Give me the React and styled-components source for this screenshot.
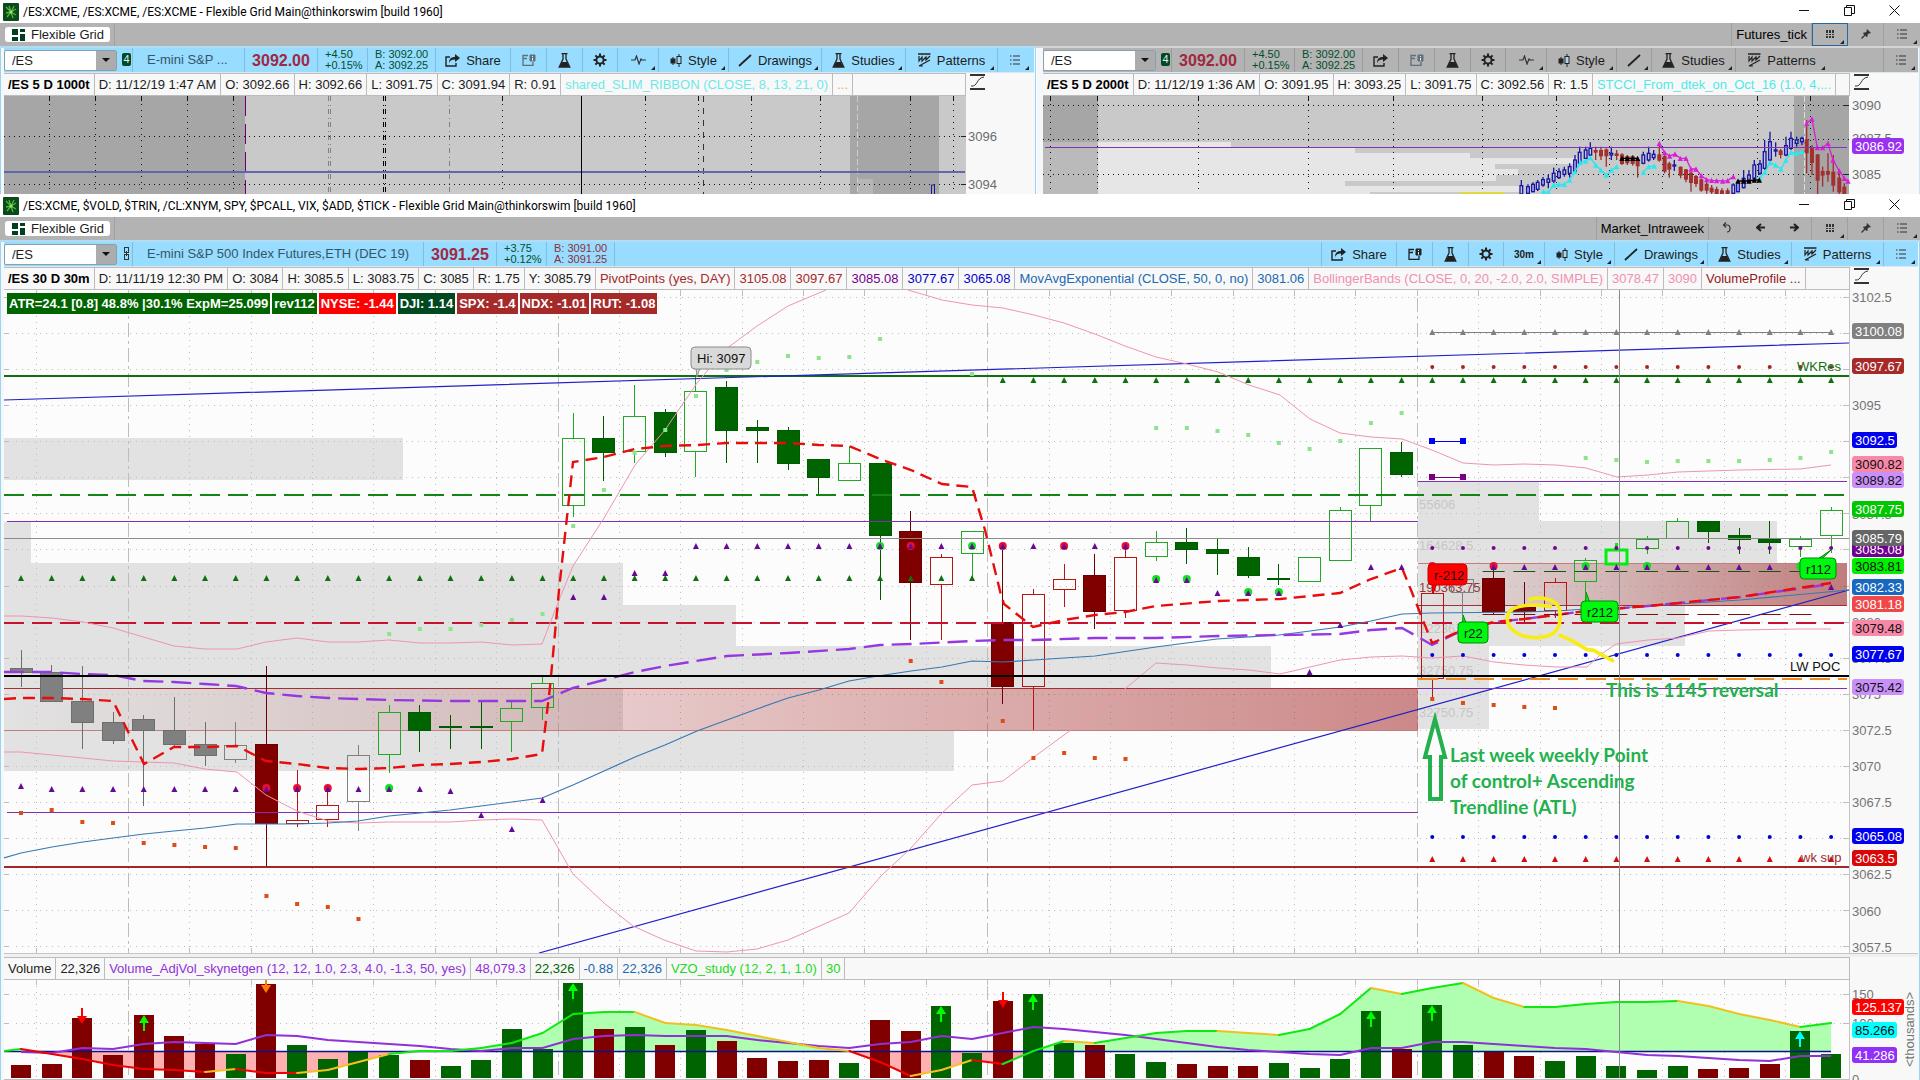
import React from 'react';
import styled, { createGlobalStyle } from 'styled-components';

const STEP = 30.68;
const px = (i) => 21 + STEP * i;
const range = (from, to) => Array.from({ length: to - from + 1 }, (_, k) => from + k);

/* ---------- chart data ---------- */

const TONES = {
    gf: { line: '#005a00', body: '#006400' },
    gh: { line: '#22a822', body: '#fcfcfc' },
    rf: { line: '#6c0000', body: '#800000' },
    rh: { line: '#b81414', body: '#fcfcfc' },
    nf: { line: '#6e6e6e', body: '#808080' },
    nh: { line: '#808080', body: '#fcfcfc' },
};

// tone, body top, body bottom, high, low
const candles = [
    ['nf', 668, 673, 650, 687], ['nf', 672, 702, 665, 702], ['nf', 701, 723, 666, 749], ['nf', 722, 741, 712, 744],
    ['nf', 719, 731, 715, 806], ['nf', 730, 745, 697, 748], ['nf', 744, 756, 722, 766], ['nh', 745, 760, 722, 763],
    ['rf', 744, 824, 666, 867], ['rh', 820, 824, 770, 827], ['rh', 805, 820, 787, 827], ['nh', 755, 802, 745, 831],
    ['gh', 712, 755, 705, 773], ['gf', 712, 731, 705, 752], ['gf', 726, 727, 715, 749], ['gf', 726, 727, 702, 749],
    ['gh', 708, 722, 702, 752], ['gh', 683, 708, 677, 720], ['gh', 438, 506, 413, 517], ['gf', 438, 453, 416, 481],
    ['gh', 416, 452, 385, 463], ['gf', 412, 453, 409, 457], ['gh', 391, 452, 377, 477], ['gf', 387, 431, 381, 463],
    ['gf', 427, 431, 420, 463], ['gf', 430, 464, 427, 470], ['gf', 459, 478, 459, 495], ['gh', 463, 481, 446, 481],
    ['gf', 463, 536, 463, 600], ['rf', 531, 583, 511, 640], ['rh', 557, 585, 554, 640], ['gh', 531, 554, 531, 577],
    ['rf', 622, 687, 546, 704], ['rh', 594, 687, 589, 730], ['rh', 579, 590, 564, 607], ['rf', 575, 612, 554, 629],
    ['rh', 557, 611, 548, 618], ['gh', 542, 557, 531, 561], ['gf', 542, 550, 528, 564], ['gf', 549, 554, 539, 575],
    ['gf', 557, 576, 547, 578], ['gf', 578, 579, 564, 585], ['gh', 557, 582, 557, 582], ['gh', 510, 561, 507, 561],
    ['gh', 448, 506, 448, 521], ['gf', 452, 475, 442, 477], ['rh', 593, 679, 575, 697], ['nh', 579, 593, 579, 615],
    ['rf', 578, 612, 570, 614], ['rf', 607, 612, 582, 623], ['rh', 582, 611, 578, 618], ['gh', 560, 582, 558, 592],
    null, ['gh', 539, 549, 536, 554], ['gh', 521, 539, 518, 539], ['gf', 521, 532, 521, 543],
    ['gf', 535, 540, 528, 554], ['gf', 539, 543, 521, 554], ['gh', 539, 547, 536, 557], ['gh', 510, 536, 507, 553],
];

const parabolicHigh = {
    12: 634, 13: 629, 14: 629, 15: 625, 16: 620, 17: 614, 18: 526, 19: 490, 20: 453, 21: 430, 22: 396, 23: 370,
    24: 362, 25: 356, 26: 358, 27: 357, 28: 339, 31: 374, 37: 428, 38: 428, 39: 431, 40: 435, 41: 443, 42: 449,
    43: 441, 44: 423, 45: 413, 51: 458, 52: 460, 53: 462, 54: 461, 55: 461, 56: 461, 57: 460, 58: 458, 59: 452,
};

const parabolicLow = {
    0: 813, 1: 810, 2: 822, 3: 823, 4: 843, 5: 845, 6: 847, 7: 848, 8: 896, 9: 904, 10: 907, 11: 919, 29: 661,
    30: 682, 32: 721, 33: 758, 34: 753, 35: 758, 36: 759, 46: 699, 47: 703, 48: 705, 49: 707, 50: 708,
};

const purpleMarks = [
    [0, 786], ...range(1, 13).map((i) => [i, 789]), [14, 791], [15, 815], [16, 829], [17, 800], [18, 597], [19, 597],
    [20, 573], [21, 573], ...range(22, 36).map((i) => [i, 546]), [37, 580], [38, 580], [39, 593], [40, 593], [41, 593],
    [42, 672], [43, 625], [44, 567], [45, 567], ...range(48, 57).map((i) => [i, 567]), [59, 587],
];

const rings = [
    [8, 788, 'r'], [9, 788, 'r'], [10, 788, 'r'], [12, 788, 'g'], [28, 546, 'g'], [29, 546, 'r'], [31, 546, 'g'],
    [32, 546, 'r'], [34, 546, 'r'], [36, 546, 'r'], [37, 579, 'g'], [38, 579, 'g'], [40, 592, 'g'], [41, 592, 'g'],
    [46, 566, 'r'], [48, 566, 'r'], [51, 566, 'g'], [53, 566, 'g'], [58, 566, 'g'],
];

const upperBand = '4,616 21,616 52,618 83,622 113,628 140,636 174,646 205,649 237,649 266,642 297,638 328,642 358,642 389,640 420,643 450,643 481,642 512,645 542,644 559,600 573,566 604,518 635,465 665,430 697,383 726,349 757,326 788,306 826,290';
const upperBandRight = '908,290 942,300 972,305 1003,308 1034,315 1064,323 1095,334 1125,346 1156,357 1187,364 1218,372 1249,385 1280,395 1310,419 1340,433 1371,437 1402,439 1432,450 1463,463 1494,465 1524,464 1556,465 1586,468 1617,477 1648,475 1678,472 1739,470 1800,469 1831,465';
const lowerBand = '4,752 21,752 52,755 83,758 113,761 144,762 174,763 205,769 237,772 266,795 297,811 328,821 358,823 389,822 450,822 481,820 512,819 542,820 573,874 604,903 633,926 664,940 696,951 727,952 757,949 788,940 849,913 881,876 911,848 942,813 972,785 1003,781 1034,757 1064,735 1095,713 1126,688 1156,663 1187,665 1218,668 1249,670 1280,674 1310,667 1340,660 1371,657 1402,656 1432,658 1463,656 1494,662 1524,665 1556,667 1587,667 1600,655 1616,644 1648,640 1678,638 1709,631 1739,630 1800,629 1831,629';
const ema = '4,858 21,853 52,847 83,842 113,838 144,834 174,831 205,828 237,824 297,824 328,823 358,821 389,816 420,813 450,810 481,806 512,802 542,798 573,785 604,771 635,757 665,745 697,731 727,720 757,709 788,698 819,690 849,681 878,676 911,671 942,667 972,661 1003,662 1034,660 1064,658 1095,656 1156,647 1217,639 1279,635 1310,631 1340,627 1371,621 1402,614 1432,613 1524,612 1556,611 1586,609 1617,608 1648,606 1740,600 1849,590';
const weeklyAvg = '4,672 51,672 82,674 113,675 128,678 143,681 174,682 205,684 236,686 266,693 297,696 328,698 358,699 389,700 450,701 512,701 542,701 573,688 604,680 635,672 665,666 696,661 727,656 788,653 849,649 880,645 911,644 972,641 1003,640 1034,640 1095,638 1156,638 1218,636 1279,635 1340,634 1371,630 1402,628 1420,638 1432,645 1463,630 1494,622 1524,619 1586,611 1648,606 1740,597 1831,584';
const dailyAvg = '4,699 21,698 51,698 82,699 113,701 144,764 174,747 205,747 237,746 266,761 297,764 328,768 358,769 389,768 420,765 450,764 481,762 512,759 542,754 550,687 559,590 573,462 604,457 635,449 665,446 697,445 727,443 788,443 819,445 849,446 880,459 911,470 942,484 972,487 985,530 1001,595 1004,604 1033,627 1064,620 1095,615 1125,612 1156,606 1218,601 1249,600 1280,599 1340,593 1371,579 1402,568 1411,590 1432,643 1463,630 1494,622 1524,619 1556,615 1586,611 1648,606 1740,597 1831,583';

const profile = [
    [4, 438, 399, 42], [4, 522, 27, 41], [4, 563, 619, 42], [4, 605, 732, 41], [4, 646, 1267, 42], [4, 688, 619, 42],
    [4, 730, 950, 41], [1418, 481, 121, 40], [1418, 521, 359, 42], [1418, 563, 429, 42], [1418, 605, 267, 41], [1418, 646, 71, 83],
];

const profileText = [
    [509, '55606', '#c6c6c6'], [550, '164628.5', '#c6c6c6'], [592, '190363.75', '#8c3c3c'],
    [633, '122367.5', '#c6c6c6'], [675, '32750.75', '#c6c6c6'], [717, '32750.75', '#c6c6c6'],
];

const splitLine = (k) => Math.round(128 + 61.37 * k);
const mainVerticals = [36, ...range(0, 27).map(splitLine)];
const daySplits = [0, 7, 14, 21].map(splitLine);

const mainAxis = [
    [297, '3102.5'], [405, '3095'], [514, '3087.5'], [622, '3080'], [658, '3077.5'], [694, '3075'], [730, '3072.5'], [766, '3070'],
    [802, '3067.5'], [874, '3062.5'], [911, '3060'], [947, '3057.5'],
];

const mainTags = [
    [331, '3100.08', '#808080', '#fff'], [366, '3097.67', '#a52a2a', '#fff'], [440, '3092.5', '#0000f0', '#fff'],
    [464, '3090.82', '#f888a8', '#111'], [480, '3089.82', '#c890f8', '#111'], [509, '3087.75', '#00c800', '#fff'],
    [549, '3085.08', '#700090', '#fff'], [538, '3085.79', '#666666', '#fff'], [566, '3083.81', '#00ee00', '#111'],
    [587, '3082.33', '#1868c0', '#fff'], [604, '3081.18', '#f04848', '#fff'], [628, '3079.48', '#f888a8', '#111'],
    [654, '3077.67', '#0000f0', '#fff'], [687, '3075.42', '#c890f8', '#111'], [836, '3065.08', '#0000f0', '#fff'],
    [858, '3063.5', '#d80808', '#fff'],
];

// bar top and tone of the volume bars, one for each candle
const volume = [
    [1065, 'r'], [1064, 'r'], [1018, 'r'], [1055, 'r'], [1015, 'r'], [1036, 'r'], [1044, 'r'], [1054, 'g'], [984, 'r'], [1045, 'g'],
    [1059, 'g'], [1052, 'g'], [1055, 'g'], [1060, 'r'], [1066, 'g'], [1060, 'g'], [1029, 'g'], [1049, 'g'], [983, 'g'], [1029, 'r'],
    [1027, 'g'], [1045, 'r'], [1030, 'g'], [1041, 'r'], [1058, 'r'], [1061, 'r'], [1060, 'r'], [1063, 'g'], [1020, 'r'], [1031, 'r'],
    [1006, 'g'], [1053, 'g'], [1001, 'r'], [994, 'g'], [1043, 'g'], [1045, 'r'], [1054, 'g'], [1062, 'g'], [1064, 'r'], [1066, 'r'],
    [1066, 'r'], [1063, 'g'], [1068, 'g'], [1059, 'g'], [1011, 'g'], [1049, 'r'], [1005, 'g'], [1045, 'g'], [1052, 'r'], [1056, 'r'],
    [1061, 'g'], [1056, 'g'], [1066, 'g'], [1070, 'g'], [1066, 'g'], [1069, 'r'], [1068, 'r'], [1064, 'r'], [1031, 'g'], [1054, 'g'],
];

const volumeAvg = [
    1052, 1053, 1048, 1049, 1044, 1042, 1043, 1044, 1035, 1036, 1040, 1042, 1044, 1046, 1049, 1051, 1048, 1048, 1039, 1036,
    1035, 1036, 1036, 1036, 1040, 1043, 1046, 1048, 1044, 1042, 1036, 1039, 1033, 1027, 1029, 1032, 1035, 1039, 1043, 1047,
    1050, 1052, 1054, 1055, 1048, 1048, 1042, 1042, 1044, 1046, 1048, 1049, 1052, 1055, 1056, 1058, 1060, 1061, 1056, 1056,
];

const vzo = [
    1049, 1054, 1059, 1065, 1069, 1070, 1072, 1069, 1073, 1073, 1070, 1062, 1054, 1051, 1051, 1048, 1043, 1033, 1014, 1012,
    1012, 1023, 1025, 1030, 1036, 1042, 1048, 1051, 1062, 1076, 1070, 1060, 1064, 1051, 1041, 1043, 1038, 1033, 1031, 1031,
    1033, 1035, 1029, 1014, 988, 994, 988, 983, 998, 1007, 1007, 1004, 1002, 1002, 1001, 1006, 1014, 1020, 1027, 1023,
];

const volumeArrows = [
    [2, 1008, 'down', '#ff0000'], [4, 1015, 'up', '#00ff00'], [8, 977, 'down', '#ff8000'], [18, 983, 'up', '#00ff00'],
    [30, 1006, 'up', '#00ff00'], [32, 992, 'down', '#ff0000'], [33, 994, 'up', '#00ff00'], [44, 1011, 'up', '#00ff00'],
    [46, 1005, 'up', '#00ff00'], [58, 1031, 'up', '#00ffff'],
];

// x, body top, body bottom, high, low on a grid three times finer than the pane
const tickBlue = [
    [64, 272, 297, 255, 297], [84, 275, 295, 268, 297], [99, 268, 290, 262, 292], [113, 262, 283, 255, 288], [129, 254, 270, 246, 275],
    [145, 252, 262, 240, 280], [161, 235, 258, 218, 265], [177, 230, 248, 220, 252], [193, 225, 238, 215, 245], [209, 215, 235, 205, 248],
    [225, 195, 228, 180, 232], [239, 172, 205, 155, 205], [257, 165, 190, 155, 192], [271, 160, 180, 142, 184], [334, 175, 180, 155, 195],
    [430, 180, 205, 170, 208], [446, 175, 195, 155, 200], [461, 178, 188, 165, 195], [523, 210, 213, 195, 228], [700, 270, 295, 265, 297],
    [714, 262, 290, 255, 292], [731, 250, 278, 225, 280], [747, 240, 260, 225, 265], [763, 210, 250, 195, 255], [780, 207, 235, 195, 240],
    [794, 170, 220, 135, 224], [810, 140, 195, 110, 200], [827, 165, 168, 142, 185], [858, 152, 180, 125, 184], [873, 130, 160, 110, 165],
    [890, 135, 145, 125, 155], [906, 130, 140, 125, 150],
];

const tickRed = [
    [287, 167, 171, 155, 195], [303, 167, 182, 155, 195], [319, 165, 182, 160, 215], [350, 177, 181, 165, 195], [366, 180, 205, 175, 210],
    [382, 185, 203, 180, 210], [398, 185, 205, 180, 212], [413, 197, 212, 190, 248], [478, 180, 195, 150, 200], [494, 185, 228, 175, 235],
    [508, 207, 222, 200, 248], [542, 217, 240, 215, 250], [558, 225, 252, 222, 262], [573, 235, 262, 230, 290], [588, 245, 265, 240, 275],
    [604, 255, 285, 250, 290], [620, 268, 285, 260, 296], [635, 280, 290, 270, 297], [650, 284, 295, 275, 297], [666, 288, 297, 280, 297],
    [683, 288, 297, 280, 297], [842, 168, 178, 162, 190], [920, 135, 173, 75, 235], [936, 160, 202, 150, 240], [953, 180, 255, 178, 297],
    [968, 230, 240, 215, 275], [984, 230, 237, 175, 260], [1000, 232, 270, 180, 290], [1018, 250, 290, 235, 297], [1033, 277, 297, 265, 297],
];

const ribbons = [
    ['#28e8f0', [[130, 290], [145, 292], [161, 270], [177, 268], [193, 268], [209, 255], [225, 230], [241, 203], [257, 198], [271, 188], [287, 210], [303, 225], [319, 240], [335, 225], [350, 215]]],
    ['#28e8f0', [[430, 232], [446, 215], [463, 213]]],
    ['#28e8f0', [[780, 248], [795, 232], [810, 203], [827, 210], [843, 222], [858, 195], [873, 172], [890, 175], [906, 170]]],
    ['#000000', [[366, 190], [382, 190], [398, 190], [413, 190]]],
    ['#000000', [[714, 258], [731, 258], [747, 258], [763, 255], [778, 255]]],
    ['#d820d8', [[478, 145], [494, 173], [509, 183], [525, 177], [541, 190], [558, 190], [573, 222], [588, 222], [604, 242], [620, 254], [635, 256], [650, 257], [668, 258], [683, 257], [700, 245]]],
    ['#d820d8', [[920, 85], [936, 72], [952, 158], [968, 158], [984, 145], [999, 195], [1018, 228], [1033, 250], [1044, 258]]],
];

/* ---------- icons ---------- */

const LogoIcon = () => (
    <svg width="16" height="18" viewBox="0 0 16 18" aria-hidden="true">
        <rect width="16" height="18" rx="1" fill="#0b4a1c" />
        <path d="M8 9L3 4M8 9L6 3M8 9l3-6M8 9l5-3M8 9l5 3M8 9l2 6M8 9l-4 5M8 9l-5 1" stroke="#4fb838" strokeWidth="1.3" />
        <circle cx="8" cy="9" r="1.500" fill="#a0e070" />
    </svg>
);

const GridLogo = () => (
    <svg width="13" height="12" viewBox="0 0 13 12" fill="#00401f" aria-hidden="true">
        <path d="M0 0h6v6H0zM0 8h6v4H0zM8 0h5v3H8zM8 5h5v7H8z" />
    </svg>
);

const ShareIcon = () => (
    <svg width="15" height="13" viewBox="0 0 15 13" aria-hidden="true">
        <path d="M5 3H1v9h10V9" fill="none" stroke="#222" strokeWidth="1.4" />
        <path d="M4 9c0-4 2-6 6-6V0l5 4-5 4V5.600C7 5.500 5.500 6.500 4 9z" fill="#222" />
    </svg>
);

const NoteIcon = ({ dim }) => (
    <svg width="14" height="12" viewBox="0 0 14 12" fill="none" stroke={dim ? '#60707a' : '#222'} aria-hidden="true">
        <path d="M6 1.500H1v10h10V8M1 4.500h4" strokeWidth="1.300" />
        <path d="M8 1h5v6H8z" fill={dim ? '#60707a' : '#222'} />
        <path d="M10.500 2v1M10.500 4v2.500" stroke="#e8f4fa" />
    </svg>
);

const FlaskIcon = () => (
    <svg width="13" height="15" viewBox="0 0 13 15" aria-hidden="true">
        <path d="M3.500.7h6M5 .7V6L1.200 14h10.600L8 6V.7" fill="none" stroke="#222" strokeWidth="1.300" />
        <path d="M4 9h5l2.500 5H1.500z" fill="#222" />
    </svg>
);

const GearIcon = () => (
    <svg width="14" height="14" viewBox="-7 -7 14 14" stroke="#222" fill="none" aria-hidden="true">
        <circle r="3.600" strokeWidth="2" />
        {range(0, 7).map((k) => <path key={k} d="M0-4v-2.500" strokeWidth="2" transform={`rotate(${k * 45})`} />)}
    </svg>
);

const PulseIcon = () => (
    <svg width="15" height="10" viewBox="0 0 15 10" aria-hidden="true">
        <path d="M0 5h4l1.500-4 2.500 8 2-5 1 1h4" fill="none" stroke="#333" strokeWidth="1.200" />
    </svg>
);

const CandleIcon = () => (
    <svg width="12" height="13" viewBox="0 0 12 13" stroke="#222" aria-hidden="true">
        <path d="M3 3v8M9 0v13" />
        <rect x="1" y="5" width="4" height="4" fill="#222" />
        <rect x="7" y="2.500" width="4" height="7" fill="#a8d8ee" />
    </svg>
);

const LineIcon = () => (
    <svg width="14" height="13" viewBox="0 0 14 13" aria-hidden="true">
        <path d="M1 12L13 1" stroke="#222" strokeWidth="1.800" />
    </svg>
);

const PatternIcon = () => (
    <svg width="13" height="14" viewBox="0 0 13 14" fill="none" stroke="#222" aria-hidden="true">
        <path d="M0 1h12.500" strokeWidth="1.500" />
        <path d="M1 3v5l3-4v4l4-4v3l4-4M1 13L12 7M1 13h4" strokeWidth="1.200" />
    </svg>
);

const MenuIcon = () => (
    <svg width="10" height="10" viewBox="0 0 10 10" stroke="#333" aria-hidden="true">
        <path d="M0 1h1.500M3 1h7M0 5h1.500M3 5h7M0 9h1.500M3 9h7" />
    </svg>
);

const DotsIcon = () => (
    <svg width="8" height="8" viewBox="0 0 8 8" fill="#333" aria-hidden="true">
        <path d="M0 0h2v3H0zM3 0h2v3H3zM6 0h2v3H6zM0 4h2v1H0zM3 4h2v1H3zM6 4h2v1H6zM0 6h2v2H0zM3 6h2v2H3zM6 6h2v2H6z" />
    </svg>
);

const PinIcon = () => (
    <svg width="10" height="10" viewBox="0 0 10 10" aria-hidden="true">
        <path d="M6 0l4 4-1 .5-1-.3-1.500 1.600.2 1.700-1 .6L2 4.400l.7-1 1.700.2L6 2l-.4-1z" fill="#333" />
        <path d="M4 6L.5 9.500" stroke="#333" strokeWidth="1.200" />
    </svg>
);

const ChainIcon = () => (
    <svg width="7" height="13" viewBox="0 0 7 13" fill="none" stroke="#333" aria-hidden="true">
        <rect x="1.500" y=".5" width="4" height="5" /><rect x="1.500" y="7.500" width="4" height="5" /><path d="M3.500 4v5" />
    </svg>
);

const ScaleIcon = () => (
    <svg width="15" height="16" viewBox="0 0 15 16" fill="none" stroke="#333" aria-hidden="true">
        <path d="M0 1h15M0 15h15" strokeWidth="2" />
        <path d="M1 12c7 1 5-8 13-9" />
    </svg>
);

const UndoIcon = () => (
    <svg width="9" height="11" viewBox="0 0 9 11" fill="none" stroke="#333" strokeWidth="1.200" aria-hidden="true">
        <path d="M4 .5L1.500 3 4 5.500M1.500 3H5c4 0 4 7 0 7" />
    </svg>
);

const ArrowIcon = ({ right }) => (
    <svg width="9" height="9" viewBox="0 0 9 9" fill="none" stroke="#222" strokeWidth="2" aria-hidden="true">
        <path d={right ? 'M0 4.500h8M4 1l4 3.500L4 8' : 'M9 4.500H1M5 1L1 4.500 5 8'} />
    </svg>
);

const WindowIcon = ({ kind }) => (
    <svg width="11" height="11" viewBox="0 0 11 11" fill="none" stroke="#111" aria-hidden="true">
        {kind === 'Minimize' && <path d="M0 5.500h10" />}
        {kind === 'Restore' && <path d="M.5 2.500h7v8h-7zM2.500 2.500v-2h8v8h-3" />}
        {kind === 'Close' && <path d="M.5.5l10 10M10.500.5l-10 10" />}
    </svg>
);

/* ---------- chart parts ---------- */

const Tri = ({ x, y, fill, s = 4 }) => <path d={`M${x - s} ${y + s}L${x} ${y - s}L${x + s} ${y + s}z`} fill={fill} />;

const Tag = ({ y, text, fill, color }) => (
    <g>
        <rect x="1852" y={y - 8} width={text.length > 6 ? 52 : 45} height="16" rx="3" fill={fill} />
        <AxisText x="1855" y={y + 5} fill={color}>{text}</AxisText>
    </g>
);

const Callout = ({ x, y, w, h, tip, fill, stroke, children }) => (
    <g>
        <path d={`M${x + 4} ${y + h / 2}L${tip[0]} ${tip[1]}L${x + 12} ${y + h / 2}z`} fill={fill} stroke={stroke} />
        <rect x={x} y={y} width={w} height={h} rx="4" fill={fill} stroke={stroke} />
        <ChartText x={x + 6} y={y + h / 2 + 5} fill="#111">{children}</ChartText>
    </g>
);

const LeftTickChart = () => (
    <Chart viewBox="4 96 1030 98" role="img" aria-label="/ES 1000 tick chart">
        <rect x="4" y="96" width="962" height="98" fill="#c9c9c9" />
        <rect x="4" y="96" width="241" height="98" fill="#a6a6a6" />
        <rect x="850" y="96" width="89" height="98" fill="#a6a6a6" />
        <rect x="858" y="179" width="15" height="15" fill="#b6b6b6" />
        <rect x="966" y="96" width="68" height="98" fill="#f8f8f8" />
        {[49, 95, 141, 187, 233, 502, 645, 698, 751, 820, 910, 953].map((x) => (
            <g key={x} stroke="#111">
                <path d={`M${x}.5 96v5`} />
                <path d={`M${x}.5 104v90`} strokeDasharray="1 5" />
            </g>
        ))}
        <path d="M328.500 96v98M330.500 96v98M449.500 96v98" stroke="#808080" strokeDasharray="5 4 1 3" />
        <path d="M383.500 96v98M385.500 96v98" stroke="#000" strokeDasharray="5 4 1 3" />
        <path d="M703.500 96v98" stroke="#333" strokeDasharray="6 6" />
        <path d="M857.500 96v98" stroke="#ccc" strokeDasharray="6 3" />
        <path d="M4 136.500h960M4 184.500h960" stroke="#111" strokeDasharray="1 4" />
        <path d="M245.500 96v98" stroke="#700070" strokeDasharray="20 8" />
        <path d="M4 172h961" stroke="#6464b4" strokeWidth="2" />
        <path d="M581.500 96v98" stroke="#000" />
        <path d="M931.500 194v-9h3v9" fill="none" stroke="#1818a0" />
        <path d="M961 136.500h5M961 184.500h5" stroke="#222" />
        <AxisText x="968" y="141" fill="#6c6c6c">3096</AxisText>
        <AxisText x="968" y="189" fill="#6c6c6c">3094</AxisText>
    </Chart>
);

const RightTickChart = () => (
    <Chart viewBox="1043 96 875 98" role="img" aria-label="/ES 2000 tick chart">
        <rect x="1043" y="96" width="806" height="98" fill="#c9c9c9" />
        <path d="M1098 142h133v6h124v5h115v5h110v6h-85v5h23v6h-22v6h-151v5h176v6h-151v2h-272z" fill="#e6e6e6" />
        <rect x="1043" y="96" width="55" height="98" fill="#a6a6a6" />
        <rect x="1043" y="142" width="55" height="52" fill="#bababa" />
        <rect x="1794" y="96" width="55" height="98" fill="#a6a6a6" />
        <rect x="1849" y="96" width="69" height="98" fill="#f8f8f8" />
        <rect x="1460" y="192" width="44" height="2" fill="#e0d840" />
        {[1050, 1097, 1198, 1308, 1393, 1482, 1556, 1609, 1662, 1757, 1810].map((x) => (
            <g key={x} stroke="#111">
                <path d={`M${x}.5 96v5`} />
                <path d={`M${x}.5 104v90`} strokeDasharray="1 5" />
            </g>
        ))}
        <path d="M1043 105.500h806M1043 139.500h806M1043 174.500h806" stroke="#111" strokeDasharray="1 4" />
        <path d="M1804.500 96v98" stroke="#ddd" strokeDasharray="6 2" />
        <g transform="translate(1500 95) scale(.3333)" strokeWidth="4">
            {tickBlue.map(([x, t, b, h, l]) => (
                <g key={x} stroke="#1818a0">
                    <path d={`M${x} ${h}V${l}`} />
                    <rect x={x - 4} y={t} width="8" height={b - t} fill="#c4c4f0" />
                </g>
            ))}
            {tickRed.map(([x, t, b, h, l]) => (
                <g key={x} stroke="#a03030">
                    <path d={`M${x} ${h}V${l}`} />
                    <rect x={x - 4} y={t} width="8" height={b - t} fill="#a83030" />
                </g>
            ))}
            {ribbons.map(([color, pts], k) => (
                <g key={k}>
                    <polyline points={pts.join(' ')} fill="none" stroke={color} />
                    {pts.map(([x, y]) => <Tri key={x} x={x} y={y} s={8} fill={color} />)}
                </g>
            ))}
        </g>
        <path d="M1045 147.500h802" stroke="#8830b8" />
        <path d="M1843 105.500h6M1843 174.500h6" stroke="#222" />
        <AxisText x="1852" y="110" fill="#6c6c6c">3090</AxisText>
        <AxisText x="1852" y="143" fill="#6c6c6c">3087.5</AxisText>
        <AxisText x="1852" y="179" fill="#6c6c6c">3085</AxisText>
        <Tag y={146} text="3086.92" fill="#9a30f0" color="#fff" />
    </Chart>
);

const MainChart = () => (
    <Chart viewBox="4 290 1914 663" role="img" aria-label="/ES 30 minute chart">
        <defs>
            <linearGradient id="zoneLeft">
                <stop offset="0" stopColor="#a52a2a" stopOpacity="0" />
                <stop offset="1" stopColor="#a52a2a" stopOpacity=".55" />
            </linearGradient>
        </defs>
        <rect x="4" y="290" width="1845" height="663" fill="#fcfcfc" />
        <rect x="1850" y="290" width="68" height="663" fill="#f8f8f8" />
        {profile.map(([x, y, w, h]) => <rect key={`${x}-${y}`} x={x} y={y} width={w} height={h} fill="#e2e2e2" />)}

        <g stroke="#bdbdbd">
            {range(0, 18).map((k) => (
                <g key={k}>
                    <path d={`M16 ${Math.round(297 + 36.07 * k)}.5H1849`} strokeDasharray="1 5" />
                    <path d={`M4 ${Math.round(297 + 36.07 * k)}.5h5m1834 0h6`} />
                </g>
            ))}
            {mainVerticals.map((x) => (
                <g key={x}>
                    <path d={`M${x}.5 290v6m0 652v5`} />
                    <path d={`M${x}.5 298V948`} strokeDasharray={daySplits.includes(x) ? '14 4 3 4' : '1 5'} />
                </g>
            ))}
        </g>

        {profileText.map(([y, text, color]) => <ChartText key={y} x="1419" y={y} fill={color}>{text}</ChartText>)}

        <rect x="4" y="688" width="1414" height="42" fill="url(#zoneLeft)" />
        <rect x="1418" y="563" width="429" height="42" fill="url(#zoneLeft)" />
        <path d="M4 688.500h1414M1418 605.500h429" stroke="#a03038" />
        <path d="M4 730.500h1414M1418 563.500h429" stroke="#c08080" />

        {candles.map((c, i) => {
            if (!c) return null;
            const [tone, top, bottom, high, low] = c;
            const { line, body } = TONES[tone];
            const x = Math.floor(px(i));
            const hollow = tone[1] === 'h';
            return (
                <g key={i} stroke={line}>
                    <path d={`M${x}.5 ${high}V${top}M${x}.5 ${bottom}V${low}`} />
                    <rect x={x - 10.5} y={top + 0.5} width="22" height={Math.max(bottom - top - 1, 1)} fill={hollow ? 'none' : body} />
                </g>
            );
        })}
        <rect x="1606" y="550" width="21" height="14" fill="none" stroke="#00ee10" strokeWidth="3" />
        <path d="M1616.500 543v6" stroke="#00ee10" strokeWidth="3" />

        <g fill="none">
            <path d="M4 376h1845" stroke="#107010" strokeWidth="2" />
            <path d="M4 400L1849 343M539 953L1849 590" stroke="#2020c8" strokeWidth="1.2" />
            <path d="M4 495h1843" stroke="#148414" strokeWidth="2" strokeDasharray="20 8" />
            <path d="M7 521.500h1411M7 812.500h1411M1418 481.500h429M1418 688.500h429" stroke="#8030b8" />
            <path d="M4 538.500h1845" stroke="#8c8c8c" />
            <path d="M4 623h1843" stroke="#c81030" strokeWidth="2" strokeDasharray="20 8" />
            <path d="M4 867h1845" stroke="#a02828" strokeWidth="2" />
            <path d="M1418 679h429" stroke="#f08820" strokeWidth="2" strokeDasharray="20 8" />
            <path d="M1432 332.500h399" stroke="#808080" />
            <polyline points={upperBand} stroke="#f094b0" />
            <polyline points={upperBandRight} stroke="#f094b0" />
            <polyline points={lowerBand} stroke="#f094b0" />
            <polyline points={ema} stroke="#3878b0" strokeWidth="1.2" />
            <polyline points={weeklyAvg} stroke="#9638e0" strokeWidth="2.400" strokeDasharray="20 8" />
            <polyline points={dailyAvg} stroke="#e80c0c" strokeWidth="2.400" strokeDasharray="12 7" />
            <path d="M4 676h1845" stroke="#000" strokeWidth="2" />
        </g>
        {range(48, 58).map((i) => (
            <g key={i}>
                <path d={`M${px(i) - 11} 571.500h22`} stroke="#105810" />
                <path d={`M${px(i) - 11} 614.500h22`} stroke="#801010" />
            </g>
        ))}

        {rings.map(([i, y, tone]) => <circle key={i} cx={px(i)} cy={y} r="4" fill={tone === 'r' ? '#e81030' : '#10e020'} />)}
        {range(0, 31).map((i) => <Tri key={i} x={px(i)} y={578} s={3} fill="#107010" />)}
        {range(32, 59).map((i) => <Tri key={i} x={px(i)} y={380} s={3} fill="#107010" />)}
        {purpleMarks.map(([i, y]) => <Tri key={i} x={px(i)} y={y} s={3} fill="#680898" />)}
        {Object.entries(parabolicHigh).map(([i, y]) => <rect key={i} x={px(Number(i)) - 2} y={y - 2} width="4" height="4" fill="#8ee48e" />)}
        {Object.entries(parabolicLow).map(([i, y]) => <rect key={i} x={px(Number(i)) - 2} y={y - 2} width="4" height="4" fill="#e04c18" />)}
        {range(46, 59).map((i) => (
            <g key={i}>
                <Tri x={px(i)} y={332} s={3} fill="#808080" />
                <circle cx={px(i)} cy="367" r="2" fill="#a02828" />
                <circle cx={px(i)} cy="548" r="2" fill="#700890" />
                <circle cx={px(i)} cy="655" r="2" fill="#0000d8" />
                <circle cx={px(i)} cy="837" r="2" fill="#0000d8" />
                <Tri x={px(i)} y={859} s={3} fill="#d01010" />
            </g>
        ))}
        <path d="M1432 441.500h31" stroke="#0000f0" />
        <path d="M1429 438h6v6h-6zM1460 438h6v6h-6z" fill="#0000f0" />
        <path d="M1432 477.500h31" stroke="#780080" />
        <path d="M1429 474h6v6h-6zM1460 474h6v6h-6z" fill="#780080" />

        <path d="M1619.500 290V953" stroke="#8c8c8c" />
        <Callout x={691} y={347} w={60} h={22} tip={[697, 377]} fill="#d9d9d9" stroke="#8c8c8c">Hi: 3097</Callout>
        <Callout x={1428} y={564} w={39} h={21} tip={[1433, 594]} fill="#ff0000" stroke="#c80000">r-212</Callout>
        <Callout x={1458} y={622} w={30} h={21} tip={[1463, 615]} fill="#00f810" stroke="#008800">r22</Callout>
        <Callout x={1581} y={601} w={37} h={21} tip={[1586, 592]} fill="#00f810" stroke="#008800">r212</Callout>
        <Callout x={1800} y={558} w={36} h={21} tip={[1831, 550]} fill="#00f810" stroke="#008800">r112</Callout>
        <ChartText x="1797" y="371" fill="#107010">WKRes</ChartText>
        <ChartText x="1790" y="671" fill="#111">LW POC</ChartText>
        <ChartText x="1801" y="862" fill="#a02828">wk sup</ChartText>

        <g transform="translate(1400 540) scale(.3333)" fill="none" stroke="#f8ec18" strokeWidth="11" strokeLinecap="round" strokeLinejoin="round">
            <path d="M452 200C400 190 345 196 328 215C312 245 328 272 370 288C400 296 440 294 460 280C480 262 484 240 478 205C466 176 425 170 390 178" />
            <path d="M480 286L520 304L560 328L582 331L600 342L638 362" />
        </g>
        <path d="M1435 719l-10 38h5v42h11v-42h4z" fill="none" stroke="#22b14c" strokeWidth="4" />
        <NoteText x="1606" y="697">This is 1145 reversal</NoteText>
        <NoteText x="1450" y="762">Last week weekly Point</NoteText>
        <NoteText x="1450" y="788">of control+ Ascending</NoteText>
        <NoteText x="1450" y="814">Trendline (ATL)</NoteText>

        <path d="M1849.500 290V953" stroke="#c4c4c4" />
        {mainAxis.map(([y, text]) => <AxisText key={y} x="1852" y={y + 5} fill="#747474">{text}</AxisText>)}
        {mainTags.map(([y, text, fill, color]) => <Tag key={text} y={y} text={text} fill={fill} color={color} />)}
    </Chart>
);

const BASE = 1051;

const vzoColor = (from, to) => {
    if (to === from) return to > BASE ? '#f00000' : '#10e810';
    if (to < from) return to <= BASE ? '#10e810' : '#f8c020';
    return to > BASE ? '#f00000' : '#f0c020';
};

const areaPath = (clamp) => `M${px(0)} ${BASE}L${vzo.map((y, i) => `${px(i)} ${clamp(y, BASE)}`).join('L')}L${px(59)} ${BASE}z`;

const VolumeChart = () => (
    <Chart viewBox="4 980 1914 100" role="img" aria-label="Volume">
        <rect x="4" y="980" width="1845" height="100" fill="#fcfcfc" />
        <rect x="1850" y="980" width="68" height="100" fill="#f8f8f8" />
        <g stroke="#bdbdbd">
            <path d="M16 994.500H1849M16 1023.500H1849" strokeDasharray="1 5" />
            <path d="M4 994.500h5m1834 0h6M4 1023.500h5m1834 0h6M4 1079.500h1845" />
            {mainVerticals.map((x) => (
                <g key={x}>
                    <path d={`M${x}.5 980v5`} />
                    <path d={`M${x}.5 986V1078`} strokeDasharray={daySplits.includes(x) ? '14 4 3 4' : '1 5'} />
                </g>
            ))}
        </g>
        <path d={areaPath(Math.min)} fill="#b0ffb0" />
        <path d={areaPath(Math.max)} fill="#ffb0b0" />
        {volume.map(([top, tone], i) => (
            <rect key={i} x={Math.round(px(i)) - 10} y={top} width="20" height={1078 - top} fill={tone === 'r' ? '#800000' : '#006400'} />
        ))}
        <path d="M4 1051.500H1831" stroke="#101090" strokeWidth="1.5" />
        <polyline points={volumeAvg.map((y, i) => `${px(i)},${y}`).join(' ')} fill="none" stroke="#9030d8" strokeWidth="2" />
        <path d={`M4 1051L${px(0)} ${vzo[0]}`} stroke="#10e810" strokeWidth="2" />
        {vzo.slice(1).map((y, i) => (
            <path key={i} d={`M${px(i)} ${vzo[i]}L${px(i + 1)} ${y}`} stroke={vzoColor(vzo[i], y)} strokeWidth="2" strokeLinecap="round" />
        ))}
        {volumeArrows.map(([i, y, dir, color]) => (
            <g key={i} transform={`translate(${Math.round(px(i))} ${y}) ${dir === 'down' ? 'translate(0 16) scale(1 -1)' : ''}`}>
                <path d="M0 0l5 8h-4v8h-2V8h-4z" fill={color} />
            </g>
        ))}
        <path d="M1619.500 980V1078" stroke="#8c8c8c" />
        <path d="M1849.500 980V1080" stroke="#c4c4c4" />
        {[[994, '150'], [1023, '100'], [1051, '50'], [1079, '0']].map(([y, text]) => (
            <AxisText key={text} x="1852" y={y + 5} fill="#747474">{text}</AxisText>
        ))}
        <Tag y={1007} text="125.137" fill="#ff0000" color="#fff" />
        <Tag y={1030} text="85.266" fill="#00ffff" color="#111" />
        <Tag y={1055} text="41.286" fill="#9030f8" color="#fff" />
        <AxisText transform="translate(1914 1067) rotate(-90)" fill="#747474">&lt;thousands&gt;</AxisText>
    </Chart>
);

/* ---------- chrome ---------- */

const Title = ({ children }) => (
    <TitleBar>
        <LogoIcon />
        <TitleText>{children}</TitleText>
        {['Minimize', 'Restore', 'Close'].map((kind) => (
            <WindowButton key={kind} type="button" aria-label={kind}><WindowIcon kind={kind} /></WindowButton>
        ))}
    </TitleBar>
);

const Tabs = ({ name, history, active }) => (
    <TabBar>
        <TabCell><TabButton type="button"><GridLogo />Flexible Grid</TabButton></TabCell>
        <Spacer />
        <LayoutName>{name}</LayoutName>
        {history && (
            <History>
                <BarButton type="button" $w={34} aria-label="Undo"><UndoIcon /></BarButton>
                <BarButton type="button" $w={34} aria-label="Back"><ArrowIcon /></BarButton>
                <BarButton type="button" $w={34} aria-label="Forward"><ArrowIcon right /></BarButton>
            </History>
        )}
        <BarButton type="button" $w={36} aria-label="Grid" $drop $active={active} $divided><DotsIcon /></BarButton>
        <BarButton type="button" $w={36} aria-label="Pin" $divided><PinIcon /></BarButton>
        <BarButton type="button" $w={36} aria-label="Menu" $drop><MenuIcon /></BarButton>
    </TabBar>
);

const Symbol = ({ linked }) => (
    <SymbolCell>
        <Combo>
            <input aria-label="Symbol" defaultValue="/ES" />
            <button type="button" aria-label="Choose symbol" />
        </Combo>
        <LinkButton type="button" aria-label="Link" $badge={!linked}>{linked ? <ChainIcon /> : '4'}</LinkButton>
    </SymbolCell>
);

const Quote = ({ price, change, percent, bid, ask, bidColor }) => (
    <>
        <Price>{price}</Price>
        <Pair $w={50}><span>{change}</span><span>{percent}</span></Pair>
        <Pair $w={68} $color={bidColor}><span>B: {bid}</span><span>A: {ask}</span></Pair>
    </>
);

const Tools = ({ compact, dimNote, period, gap }) => (
    <>
        {compact
            ? <Tool type="button" $w={36} aria-label="Share"><ShareIcon /></Tool>
            : <Tool type="button" $w={75}><ShareIcon />Share</Tool>}
        <Tool type="button" $w={36} aria-label="Note"><NoteIcon dim={dimNote} /></Tool>
        <Tool type="button" $w={36} aria-label="Edit studies"><FlaskIcon /></Tool>
        <Tool type="button" $w={35} aria-label="Settings"><GearIcon /></Tool>
        <Tool type="button" $w={41} $drop aria-label="Time frame">{period ? <Period>{period}</Period> : <PulseIcon />}</Tool>
        <Tool type="button" $w={70} $drop><CandleIcon />Style</Tool>
        {compact
            ? <Tool type="button" $w={35} $drop aria-label="Drawings"><LineIcon /></Tool>
            : <Tool type="button" $w={93} $drop><LineIcon />Drawings</Tool>}
        <Tool type="button" $w={84} $drop><FlaskIcon />Studies</Tool>
        <Tool type="button" $w={92} $drop $open={gap}><PatternIcon />Patterns</Tool>
        {gap && <Gap />}
        <Tool type="button" $w={34} $drop $open aria-label="Menu"><MenuIcon /></Tool>
    </>
);

const Studies = ({ cells, scale = true }) => (
    <StudyRow>
        <StudyCells>
            {cells.map(([text, color, bold], k) => <StudyCell key={k} $color={color} $bold={bold}>{text}</StudyCell>)}
        </StudyCells>
        <ScaleCell>{scale && <ScaleIcon />}</ScaleCell>
    </StudyRow>
);

const App = () => (
    <Desktop>
        <GlobalStyle />
        <Window>
            <Title>/ES:XCME, /ES:XCME, /ES:XCME - Flexible Grid Main@thinkorswim [build 1960]</Title>
            <Tabs name="Futures_tick" active />
            <Split>
                <Pane $blue>
                    <Toolbar $blue>
                        <Symbol />
                        <SymbolName $w={112}>E-mini S&amp;P ...</SymbolName>
                        <Quote price="3092.00" change="+4.50" percent="+0.15%" bid="3092.00" ask="3092.25" />
                        <Tools dimNote />
                    </Toolbar>
                    <Studies cells={[
                        ['/ES 5 D 1000t', '#000', true], ['D: 11/12/19 1:47 AM'], ['O: 3092.66'], ['H: 3092.66'], ['L: 3091.75'],
                        ['C: 3091.94'], ['R: 0.91'], ['shared_SLIM_RIBBON (CLOSE, 8, 13, 21, 0)', '#70e8e8'], ['...', '#e0b050'],
                    ]} />
                    <LeftTickChart />
                </Pane>
                <Pane $inset>
                    <Toolbar>
                        <Symbol />
                        <Quote price="3092.00" change="+4.50" percent="+0.15%" bid="3092.00" ask="3092.25" />
                        <Tools compact dimNote gap />
                    </Toolbar>
                    <Studies cells={[
                        ['/ES 5 D 2000t', '#000', true], ['D: 11/12/19 1:36 AM'], ['O: 3091.95'], ['H: 3093.25'], ['L: 3091.75'],
                        ['C: 3092.56'], ['R: 1.5'], ['STCCI_From_dtek_on_Oct_16 (1.0, 4,...', '#50e8e8'],
                    ]} />
                    <RightTickChart />
                </Pane>
            </Split>
        </Window>
        <Window>
            <Title>/ES:XCME, $VOLD, $TRIN, /CL:XNYM, SPY, $PCALL, VIX, $ADD, $TICK - Flexible Grid Main@thinkorswim [build 1960]</Title>
            <Tabs name="Market_Intraweek" history />
            <Pane $blue>
                <Toolbar $blue>
                    <Symbol linked />
                    <SymbolName $w={291}>E-mini S&amp;P 500 Index Futures,ETH (DEC 19)</SymbolName>
                    <Quote price="3091.25" change="+3.75" percent="+0.12%" bid="3091.00" ask="3091.25" bidColor="#8c3040" />
                    <Gap />
                    <Tools period="30m" />
                </Toolbar>
                <Studies cells={[
                    ['/ES 30 D 30m', '#000', true], ['D: 11/11/19 12:30 PM'], ['O: 3084'], ['H: 3085.5'], ['L: 3083.75'], ['C: 3085'],
                    ['R: 1.75'], ['Y: 3085.79'], ['PivotPoints (yes, DAY)', '#a52a2a'], ['3105.08', '#a52a2a'], ['3097.67', '#a52a2a'],
                    ['3085.08', '#700090'], ['3077.67', '#0000c8'], ['3065.08', '#0000c8'],
                    ['MovAvgExponential (CLOSE, 50, 0, no)', '#2068b0'], ['3081.06', '#2068b0'],
                    ['BollingerBands (CLOSE, 0, 20, -2.0, 2.0, SIMPLE)', '#f090b0'], ['3078.47', '#f090b0'], ['3090', '#f090b0'],
                    ['VolumeProfile ...', '#902020'],
                ]} />
                <ChartBox>
                    <MainChart />
                    <Labels>
                        <Label $bg="#006400">ATR=24.1 [0.8] 48.8% |30.1% ExpM=25.099</Label>
                        <Label $bg="#006400">rev112</Label>
                        <Label $bg="#ff0000">NYSE: -1.44</Label>
                        <Label $bg="#004820">DJI: 1.14</Label>
                        <Label $bg="#a52a2a">SPX: -1.4</Label>
                        <Label $bg="#a52a2a">NDX: -1.01</Label>
                        <Label $bg="#a52a2a">RUT: -1.08</Label>
                    </Labels>
                </ChartBox>
                <Divider />
                <Studies scale={false} cells={[
                    ['Volume'], ['22,326'], ['Volume_AdjVol_skynetgen (12, 12, 1.0, 2.3, 4.0, -1.3, 50, yes)', '#9030d8'],
                    ['48,079.3', '#9030d8'], ['22,326', '#006400'], ['-0.88', '#2068b0'], ['22,326', '#2068b0'],
                    ['VZO_study (12, 2, 1, 1.0)', '#20d820'], ['30', '#20d820'],
                ]} />
                <VolumeChart />
            </Pane>
        </Window>
    </Desktop>
);

const GlobalStyle = createGlobalStyle`
    * {
        box-sizing: border-box;
    }

    body {
        margin: 0;
        background: #fff;
        font-family: "Liberation Sans", Arial, sans-serif;
        font-size: 13px;
        color: #1c1c1c;
    }

    button,
    input {
        margin: 0;
        padding: 0;
        border: 0;
        background: none;
        font: inherit;
        color: inherit;
    }

    svg {
        flex: none;
    }
`;

const Desktop = styled.main`
    min-width: 1400px;
`;

const Window = styled.section`
    background: #fff;
`;

const TitleBar = styled.header`
    display: flex;
    align-items: center;
    height: 23px;
    padding: 0 3px 0 3px;
`;

const TitleText = styled.h1`
    flex: 1;
    margin: 0 0 0 4px;
    font: 400 12px/18px Roboto, "Segoe UI", sans-serif;
    color: #000;
    white-space: nowrap;
`;

const WindowButton = styled.button`
    display: flex;
    align-items: center;
    justify-content: center;
    width: 45px;
    height: 23px;
    padding-bottom: 2px;
`;

const TabBar = styled.nav`
    display: flex;
    height: 23px;
    padding: 0 0 0 5px;
    background: #b3b3b3;
`;

const TabCell = styled.div`
    display: flex;
    align-items: center;
    padding-right: 4px;
    border-right: 1px solid #a0a0a0;
`;

const TabButton = styled.button`
    display: flex;
    align-items: center;
    gap: 6px;
    height: 15px;
    padding: 0 6px 0 7px;
    border-radius: 3px;
    background: #fff;
`;

const Spacer = styled.div`
    flex: 1;
`;

const LayoutName = styled.div`
    padding: 0 4px;
    border-left: 1px solid #a0a0a0;
    border-right: 1px solid #a0a0a0;
    line-height: 23px;
    color: #000;
`;

const History = styled.div`
    display: flex;
    border-right: 1px solid #a0a0a0;
`;

const corner = `
    &::after {
        content: '';
        position: absolute;
        right: 3px;
        bottom: 2px;
        border-left: 4px solid transparent;
        border-bottom: 4px solid #222;
    }
`;

const BarButton = styled.button`
    position: relative;
    display: flex;
    align-items: center;
    justify-content: center;
    width: ${(p) => p.$w}px;
    padding-bottom: 2px;
    border-right: ${(p) => (p.$divided ? '1px solid #a0a0a0' : '0')};
    outline: ${(p) => (p.$active ? '1px solid #2868a0' : '0')};
    outline-offset: -1px;
    ${(p) => p.$drop && corner}
`;

const Split = styled.div`
    display: grid;
    grid-template-columns: 1036fr 884fr;
`;

const Pane = styled.div`
    min-width: 0;
    padding: ${(p) => (p.$inset ? '0 2px 0 7px' : '0 2px 0 4px')};
    border-top: 2px solid ${(p) => (p.$blue ? '#b0dcf4' : '#d4d4d4')};
    background: #f4f8fa;
    box-shadow: inset 1px 0 ${(p) => (p.$blue ? '#9cd4f0' : '#fff')}, inset -1px 0 ${(p) => (p.$blue ? '#9cd4f0' : '#d0e4ee')};
`;

const Toolbar = styled.div`
    --rule: ${(p) => (p.$blue ? '#7cc0e0' : '#9c9c9c')};
    display: flex;
    height: 25px;
    border-bottom: 1px solid #d8e8f0;
    background: ${(p) => (p.$blue ? '#98dcff' : '#b3b3b3')};
`;

const SymbolCell = styled.div`
    display: flex;
    align-items: center;
    gap: 5px;
    width: 129px;
    border-right: 1px solid var(--rule);
`;

const Combo = styled.div`
    display: flex;
    width: 113px;
    height: 21px;
    border: 1px solid #88a0ac;
    border-radius: 2px;
    background: #fff;

    input {
        flex: 1;
        min-width: 0;
        padding-left: 7px;
    }

    button {
        display: flex;
        align-items: center;
        justify-content: center;
        width: 20px;
        background: #acacac;
    }

    button::after {
        content: '';
        border: 4px solid transparent;
        border-top-color: #111;
        border-bottom: 0;
    }
`;

const LinkButton = styled.button`
    width: 9px;
    height: 13px;
    margin-bottom: 2px;
    border-radius: 2px;
    background: ${(p) => (p.$badge ? '#004828' : 'none')};
    color: #e0f0e4;
    font-size: 11px;
    line-height: 13px;
`;

const SymbolName = styled.div`
    width: ${(p) => p.$w}px;
    padding-left: 14px;
    border-right: 1px solid var(--rule);
    line-height: 24px;
    color: #34566a;
    white-space: nowrap;
`;

const Price = styled.div`
    width: 73px;
    border-right: 1px solid var(--rule);
    font-size: 16px;
    font-weight: bold;
    line-height: 26px;
    color: #a02840;
    text-align: center;
`;

const Pair = styled.div`
    display: flex;
    flex-direction: column;
    justify-content: center;
    width: ${(p) => p.$w}px;
    padding-left: 7px;
    border-right: 1px solid var(--rule);
    font-size: 11px;
    line-height: 11px;
    color: ${(p) => p.$color || '#00502c'};
    white-space: nowrap;
`;

const Gap = styled.div`
    flex: 1;
    border-right: 1px solid var(--rule);
`;

const Tool = styled.button`
    position: relative;
    display: flex;
    align-items: center;
    justify-content: center;
    gap: 6px;
    width: ${(p) => p.$w}px;
    border-right: ${(p) => (p.$open ? '0' : '1px solid var(--rule)')};
    white-space: nowrap;
    ${(p) => p.$drop && corner}
`;

const Period = styled.span`
    font-size: 10px;
    font-weight: bold;
`;

const StudyRow = styled.div`
    display: flex;
    height: 23px;
`;

const StudyCells = styled.div`
    display: flex;
    flex: 1;
    min-width: 0;
    overflow: hidden;
    border: 1px solid #bcbcbc;
    border-width: 1px 1px 1px 0;
    background: #f8f8f8;
`;

const StudyCell = styled.div`
    padding: 0 4px;
    border-right: 1px solid #bcbcbc;
    line-height: 21px;
    font-weight: ${(p) => (p.$bold ? 'bold' : 'normal')};
    color: ${(p) => p.$color || '#1c1c1c'};
    white-space: nowrap;
`;

const ScaleCell = styled.div`
    width: 68px;
    padding: 1px 0 0 4px;
    background: #f8f8f8;
`;

const ChartBox = styled.div`
    position: relative;
`;

const Chart = styled.svg`
    display: block;
    width: 100%;
    height: auto;
`;

const AxisText = styled.text`
    font-size: 13px;
`;

const ChartText = styled.text`
    font-size: 13px;
`;

const NoteText = styled.text`
    font: 700 19px Lato, Carlito, sans-serif;
    fill: #22b14c;
`;

const Labels = styled.div`
    position: absolute;
    top: 3px;
    left: 3px;
    display: flex;
    gap: 2px;
`;

const Label = styled.div`
    padding: 0 2px;
    background: ${(p) => p.$bg};
    font-weight: bold;
    line-height: 21px;
    color: #fff;
    white-space: nowrap;
`;

const Divider = styled.div`
    height: 4px;
    border-top: 1px solid #c4c4c4;
    background: #f0f0f0;
`;

export default App;
